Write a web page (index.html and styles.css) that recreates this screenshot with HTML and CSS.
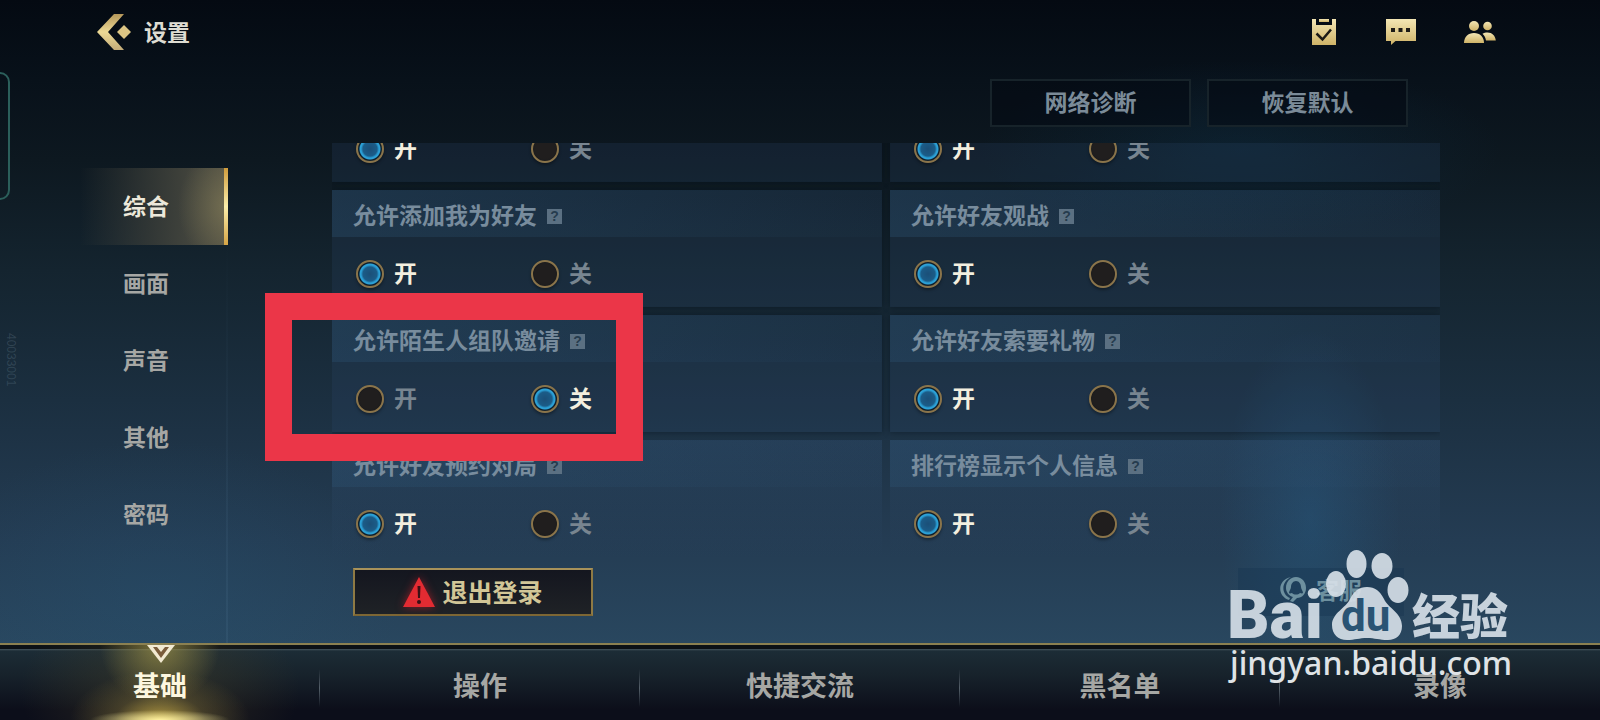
FILE: index.html
```html
<!DOCTYPE html>
<html lang="zh-CN">
<head>
  <meta charset="UTF-8" />
  <meta name="viewport" content="width=device-width, initial-scale=1.0"/>
  <title>设置</title>
  <link rel="stylesheet" href="styles.css">
</head>
<body>

  <!-- shared gold gradient for the icons -->
  <svg class="defs" width="0" height="0" aria-hidden="true">
    <defs>
      <linearGradient id="gold" x1="0" y1="0" x2="0" y2="1">
        <stop offset="0" stop-color="#f3e6b4"/>
        <stop offset="1" stop-color="#cfb367"/>
      </linearGradient>
      <linearGradient id="gold-back" x1="0" y1="0" x2="0" y2="1">
        <stop offset="0" stop-color="#b5975a"/>
        <stop offset=".5" stop-color="#ecd995"/>
        <stop offset="1" stop-color="#c3ab78"/>
      </linearGradient>
    </defs>
  </svg>

  <header class="topbar">
    <button class="back" type="button" aria-label="返回">
      <svg width="35" height="36" viewBox="0 0 35 36">
        <path d="M17 0h10L11 18l16 18H17L0 18z" fill="url(#gold-back)"/>
        <path d="M27 11l7 7-7 7-7-7z" fill="#dcc584"/>
      </svg>
    </button>
    <h1>设置</h1>
    <nav class="shortcuts">
      <button type="button" aria-label="任务">
        <svg width="26" height="26" viewBox="0 0 26 26">
          <path d="M0 0h4v6h16V0h4v26H0z" fill="url(#gold)"/>
          <path d="M7 0h10v3H7z" fill="url(#gold)"/>
          <path d="M4.500 14.500l6 6L19 10.500" fill="none" stroke="#1c1a16" stroke-width="2.500"/>
        </svg>
      </button>
      <button type="button" aria-label="聊天">
        <svg width="30" height="26" viewBox="0 0 30 26">
          <path d="M0 0h30v22H9.500L5 26v-4H0z" fill="url(#gold)"/>
          <path d="M5 9h4v4H5zM12.500 9h4v4h-4zM20 9h4v4h-4z" fill="#1c1a16"/>
        </svg>
      </button>
      <button type="button" aria-label="好友">
        <svg width="32" height="22" viewBox="0 0 32 22">
          <circle cx="10" cy="5" r="5" fill="url(#gold)"/>
          <circle cx="23.500" cy="5" r="4.300" fill="url(#gold)"/>
          <path d="M0 22c0-6 4-10 10-10s10 4 10 10z" fill="url(#gold)"/>
          <path d="M22 19.500c-.500-3-1.500-5-3.500-6.800 1.500-.900 3-1.200 5-1.200 4.500 0 7.800 3 8.300 8z" fill="url(#gold)"/>
        </svg>
      </button>
    </nav>
  </header>

  <main class="main">
    <nav class="side">
      <a class="side-item active" href="#general">综合</a>
      <a class="side-item" href="#graphics">画面</a>
      <a class="side-item" href="#sound">声音</a>
      <a class="side-item" href="#other">其他</a>
      <a class="side-item" href="#password">密码</a>
    </nav>

    <section class="content">
      <div class="tools">
        <button class="tool" type="button">网络诊断</button>
        <button class="tool" type="button">恢复默认</button>
      </div>

      <form class="list">
        <div class="card">
          <div class="options">
            <label><input type="radio" name="a" checked><span>开</span></label>
            <label><input type="radio" name="a"><span>关</span></label>
          </div>
        </div>
        <div class="card">
          <div class="options">
            <label><input type="radio" name="b" checked><span>开</span></label>
            <label><input type="radio" name="b"><span>关</span></label>
          </div>
        </div>

        <div class="card">
          <h2>允许添加我为好友<button class="help" type="button">?</button></h2>
          <div class="options">
            <label><input type="radio" name="add" checked><span>开</span></label>
            <label><input type="radio" name="add"><span>关</span></label>
          </div>
        </div>
        <div class="card">
          <h2>允许好友观战<button class="help" type="button">?</button></h2>
          <div class="options">
            <label><input type="radio" name="watch" checked><span>开</span></label>
            <label><input type="radio" name="watch"><span>关</span></label>
          </div>
        </div>

        <div class="card">
          <h2>允许陌生人组队邀请<button class="help" type="button">?</button></h2>
          <div class="options">
            <label><input type="radio" name="invite"><span>开</span></label>
            <label><input type="radio" name="invite" checked><span>关</span></label>
          </div>
        </div>
        <div class="card">
          <h2>允许好友索要礼物<button class="help" type="button">?</button></h2>
          <div class="options">
            <label><input type="radio" name="gift" checked><span>开</span></label>
            <label><input type="radio" name="gift"><span>关</span></label>
          </div>
        </div>

        <div class="card last">
          <h2>允许好友预约对局<button class="help" type="button">?</button></h2>
          <div class="options">
            <label><input type="radio" name="book" checked><span>开</span></label>
            <label><input type="radio" name="book"><span>关</span></label>
          </div>
        </div>
        <div class="card last">
          <h2>排行榜显示个人信息<button class="help" type="button">?</button></h2>
          <div class="options">
            <label><input type="radio" name="rank" checked><span>开</span></label>
            <label><input type="radio" name="rank"><span>关</span></label>
          </div>
        </div>
      </form>

      <div class="actions">
        <button class="logout" type="button">
          <svg width="32" height="30" viewBox="0 0 32 30">
            <path d="M16 0l16 30H0z" fill="#e32b32"/>
            <path d="M14.500 9h3l-.500 12h-2z" fill="#3c1015"/>
            <circle cx="16" cy="25" r="2" fill="#3c1015"/>
          </svg>
          <span>退出登录</span>
        </button>
        <button class="service" type="button">
          <svg width="28" height="26" viewBox="0 0 28 26">
            <path d="M11 1C-3 4-3 20 9 24l1-2C1 18 1 6 11 1z" fill="currentColor"/>
            <path fill-rule="evenodd" d="M16 1c6 0 10 5 10 11s-4 10-9 10l-4 4-3-1 3-4c-4-1-7-5-7-9C6 6 10 1 16 1zm0 4c-3 0-5 3-5 6 0 2-2 4-2 6 1 1 2 0 3 0 2 2 6 2 8 0 1 0 2 1 3 0 0-2-2-4-2-6 0-3-2-6-5-6z" fill="currentColor"/>
          </svg>
          <span>客服</span>
        </button>
      </div>
    </section>
  </main>

  <footer class="tabs">
    <a class="tab active" href="#basic">基础
      <svg class="marker" width="28" height="18" viewBox="0 0 28 18">
        <path d="M0 0h28L14 18z" fill="#f2ead2"/>
        <path d="M6 2h4l4 5 4-5h4l-8 11z" fill="#7b5d3c"/>
      </svg>
    </a>
    <a class="tab" href="#controls">操作</a>
    <a class="tab" href="#chat">快捷交流</a>
    <a class="tab" href="#blacklist">黑名单</a>
    <a class="tab" href="#replay">录像</a>
  </footer>

  <div class="edge-handle"></div>
  <div class="serial">40033001</div>
  <div class="highlight"></div>

  <svg class="watermark" width="300" height="150" viewBox="0 0 300 150">
    <g class="wm-main">
      <text class="wm-bai" x="7" y="98">Bai</text>
      <ellipse cx="116" cy="44" rx="10" ry="13"/>
      <ellipse cx="136.500" cy="24" rx="10" ry="14"/>
      <ellipse cx="162" cy="26" rx="10.500" ry="13"/>
      <ellipse cx="178" cy="50" rx="10.500" ry="13"/>
      <path d="M147 47c8 0 13 4 17 12 4 9 18 14 18 27 0 9-6 14-14 14-9 0-13-2-21-2s-12 2-20 2c-9 0-15-6-15-15 0-12 14-17 18-26 4-8 9-12 17-12z"/>
      <text class="wm-jy" x="192" y="94">经验</text>
    </g>
    <text class="wm-du" x="121" y="91">du</text>
    <text class="wm-url" x="10" y="135">jingyan.baidu.com</text>
  </svg>

</body>
</html>
```

FILE: styles.css
```css
* {
  box-sizing: border-box;
}

body {
  margin: 0;
  height: 100vh;
  display: flex;
  flex-direction: column;
  position: relative;
  overflow: hidden;
  font-family: "Liberation Sans", "Noto Sans CJK SC", sans-serif;
  font-weight: bold;
  color: #a6a7a4;
  background:
    radial-gradient(ellipse 90px 190px at 1310px 520px, rgba(36, 88, 126, 0.5), transparent),
    radial-gradient(ellipse 240px 160px at 160px 600px, rgba(38, 84, 116, 0.3), transparent),
    radial-gradient(ellipse 260px 90px at 1240px 150px, rgba(14, 56, 84, 0.3), transparent),
    linear-gradient(#040a12 0, #08111a 80px, #0d1820 160px, #14242f 270px, #1b2f40 400px, #243c53 540px, #29475f 645px);
}

button {
  font: inherit;
  color: inherit;
  background: none;
  border: 0;
  padding: 0;
  cursor: pointer;
}

a {
  color: inherit;
  text-decoration: none;
}

svg {
  display: block;
}

.defs {
  position: absolute;
}

/* top bar */
.topbar {
  display: flex;
  align-items: center;
  gap: 12px;
  height: 64px;
  padding: 0 104px 0 97px;
}

.topbar h1 {
  margin: 0;
  padding-bottom: 2px;
  font-size: 23px;
  color: #dedcd2;
}

.shortcuts {
  display: flex;
  align-items: center;
  gap: 48px;
  margin-left: auto;
}

/* main area */
.main {
  flex: 1;
  min-height: 0;
  display: flex;
}

.side {
  width: 228px;
  padding-top: 104px;
  font-size: 23px;
  background: linear-gradient(rgba(90, 130, 160, 0) 30%, rgba(90, 130, 160, 0.15)) right / 2px 100% no-repeat;
}

.side-item {
  display: flex;
  align-items: center;
  height: 77px;
  padding: 0 0 4px 123px;
}

.side-item.active {
  color: #ece8da;
  background:
    linear-gradient(#d09c3c, #fbeeaa 50%, #d6a546) right / 4px 100% no-repeat,
    radial-gradient(ellipse 50px 60px at 100% 50%, rgba(150, 140, 95, 0.5), transparent),
    linear-gradient(90deg, transparent 80px, rgba(62, 64, 58, 0.7) 150px, rgba(86, 84, 70, 0.95));
}

.content {
  flex: 1;
  display: flex;
  flex-direction: column;
  margin: 0 160px 0 104px;
}

.tools {
  display: flex;
  justify-content: flex-end;
  gap: 16px;
  padding: 15px 32px 16px 0;
}

.tool {
  width: 201px;
  height: 48px;
  padding-bottom: 4px;
  font-size: 23px;
  color: #7b8b98;
  background: rgba(3, 9, 18, 0.55);
  border: 2px solid #17232a;
}

/* list is scrolled, so the first row is cut by the top edge */
.list {
  flex: 1;
  min-height: 0;
  display: grid;
  grid-template-columns: 1fr 1fr;
  align-content: end;
  gap: 8px;
  overflow: hidden;
}

.card {
  background: rgba(44, 74, 108, 0.22);
  box-shadow: 0 0 6px rgba(5, 15, 25, 0.5);
}

.card.last {
  background: linear-gradient(rgba(50, 80, 115, 0.35), rgba(50, 80, 115, 0));
  box-shadow: none;
}

.card h2 {
  display: flex;
  align-items: center;
  gap: 10px;
  height: 47px;
  margin: 0;
  padding: 1px 21px 0;
  font-size: 23px;
  color: #788c9d;
  background: linear-gradient(90deg, rgba(44, 82, 114, 0.35), rgba(44, 82, 114, 0.05));
}

.help {
  width: 15px;
  height: 15px;
  margin-top: 4px;
  font-size: 14px;
  line-height: 15px;
  color: #263c4e;
  background: #5b7082;
}

.options {
  display: flex;
  height: 70px;
  padding: 23px 24px 0;
}

.options label {
  display: flex;
  align-items: center;
  gap: 10px;
  width: 175px;
  height: 28px;
  font-size: 23px;
  color: #788590;
}

.options span {
  padding-bottom: 4px;
}

.options input {
  appearance: none;
  width: 28px;
  height: 28px;
  margin: 0;
  border: 2px solid #8a744a;
  border-radius: 50%;
  background: radial-gradient(circle, #201e1e 55%, #14181c);
  box-shadow: 0 2px 3px rgba(0, 0, 0, 0.35);
}

.options input:checked {
  background: radial-gradient(circle, #1b4f78 0, #1b5c88 7px, #2ba0d6 9px, #2ba0d6 10px, #10202c 11px);
}

.options input:checked + span {
  color: #f3efdf;
}

.actions {
  display: flex;
  justify-content: space-between;
  padding: 11px 36px 27px 21px;
}

.logout {
  display: flex;
  align-items: center;
  justify-content: center;
  gap: 7px;
  width: 240px;
  height: 48px;
  font-size: 25px;
  color: #d2c697;
  background: linear-gradient(#14161f, #1f2226);
  border: 2px solid;
  border-color: #a8925a #8f7a44 #7d6634;
}

.logout span {
  padding-bottom: 2px;
}

.logout svg {
  filter: drop-shadow(0 0 4px rgba(220, 30, 40, 0.6));
}

.service {
  display: flex;
  align-items: center;
  justify-content: center;
  gap: 8px;
  width: 166px;
  height: 48px;
  padding-bottom: 6px;
  font-size: 23px;
  color: #6d909f;
  background: rgba(22, 52, 80, 0.4);
}

/* bottom tabs */
.tabs {
  display: flex;
  height: 77px;
  border-top: 2px solid #8b8051;
  font-size: 27px;
  background: linear-gradient(#0c1116 0, #0c1116 4px, #46555e 4px, #1c2c36 6px, #17222b 30px, #0c0e1a 65px);
}

.tab {
  flex: 1;
  position: relative;
  display: flex;
  align-items: center;
  justify-content: center;
  padding-top: 4px;
  background: linear-gradient(transparent, #55606a, transparent) right 24px / 1px 38px no-repeat;
}

.tab:last-child {
  background: none;
}

.tab.active {
  color: #fdf7df;
  background:
    linear-gradient(transparent, #55606a, transparent) right 24px / 1px 38px no-repeat,
    radial-gradient(ellipse 70px 10px at 50% 100%, #fff2a0, transparent),
    radial-gradient(ellipse 90px 50px at 50% 100%, rgba(215, 185, 75, 0.8), rgba(120, 105, 55, 0.4) 50%, transparent),
    radial-gradient(ellipse 60px 60px at 50% 0, rgba(175, 160, 75, 0.65), transparent),
    radial-gradient(ellipse 140px 90px at 50% 60%, rgba(75, 68, 40, 0.5), transparent);
}

.marker {
  position: absolute;
  top: 0;
  left: 50%;
  margin-left: -13px;
}

/* overlays */
.edge-handle {
  position: absolute;
  top: 72px;
  left: -20px;
  width: 30px;
  height: 128px;
  border: 2px solid #2b5f5b;
  border-radius: 10px;
}

.serial {
  position: absolute;
  top: 333px;
  left: 4px;
  writing-mode: vertical-rl;
  font-size: 12px;
  font-weight: normal;
  line-height: 14px;
  color: rgba(120, 145, 160, 0.25);
}

.highlight {
  position: absolute;
  top: 293px;
  left: 265px;
  width: 378px;
  height: 168px;
  border: 27px solid #eb3648;
}

.watermark {
  position: absolute;
  right: 80px;
  bottom: 30px;
  overflow: visible;
}

.wm-main {
  fill: #d9e2ea;
  opacity: 0.9;
}

.wm-bai {
  font: 900 66px Roboto, sans-serif;
}

.wm-jy {
  font: 900 48px "Noto Sans CJK SC", sans-serif;
}

.wm-du {
  font: 700 44px Roboto, sans-serif;
  fill: #2a5474;
}

.wm-url {
  font: 500 32px "Noto Sans", sans-serif;
  fill: #dfe3e6;
}
```
